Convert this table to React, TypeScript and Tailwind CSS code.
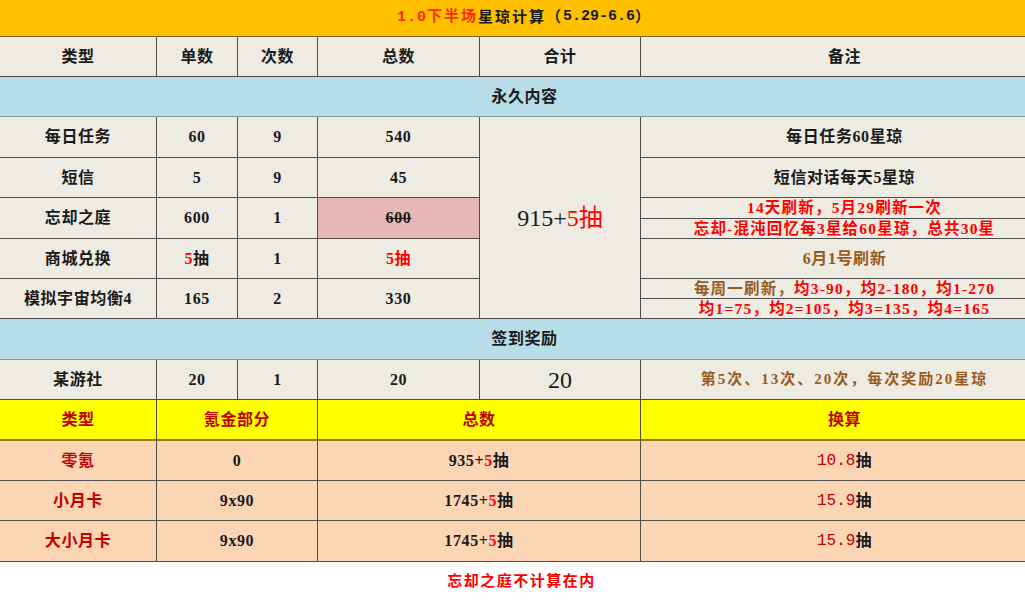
import type { ReactNode } from "react";

const line = "border-r border-b border-[#4d4d4d]";

function Cell({
  children,
  className = "",
}: {
  children?: ReactNode;
  className?: string;
}) {
  return (
    <div className={`flex items-center justify-center ${line} ${className}`}>
      {children}
    </div>
  );
}

const R = ({ children }: { children: ReactNode }) => (
  <span className="text-[#ff0000]">{children}</span>
);

const items = [
  { name: "每日任务", unit: "60", times: "9", total: "540" },
  { name: "短信", unit: "5", times: "9", total: "45" },
  { name: "忘却之庭", unit: "600", times: "1", total: "600", struck: true },
  { name: "商城兑换", unit: "5抽", times: "1", total: "5抽", red: true },
  { name: "模拟宇宙均衡4", unit: "165", times: "2", total: "330" },
];

const plans = [
  { name: "零氪", part: "0", total: "935", rate: "10.8" },
  { name: "小月卡", part: "9x90", total: "1745", rate: "15.9" },
  { name: "大小月卡", part: "9x90", total: "1745", rate: "15.9" },
];

export default function App() {
  const beige = "bg-[#eeebe3]";
  const peach = "bg-[#fcd5b4]";

  return (
    <div className="h-[600px] w-[1025px] overflow-hidden bg-white font-['Liberation_Serif','Noto_Sans_CJK_SC',serif] text-[16px] font-bold tracking-[0.6px] text-[#1a1a1a]">
      <div className="grid w-[1049px] grid-cols-[157px_81px_80px_162px_161px_408px] grid-rows-[37px_40px_40px_41px_40px_41px_40px_40px_41px_40px_41px_40px_40px_41px]">
        {/* Title */}
        <div className="col-span-6 flex items-center justify-center border-b border-[#7a6a2a] bg-[#ffc000] pb-[2px] text-[15px] tracking-[2px]">
          <span className="text-[#ff2a00]">
            <span className="font-['Liberation_Mono'] tracking-[1px]">1.0</span>
            下半场
          </span>
          星琼计算（
          <span className="font-['Liberation_Mono'] tracking-[0px]">5.29-6.6</span>）
        </div>

        {/* Header */}
        {["类型", "单数", "次数", "总数", "合计", "备注"].map((h) => (
          <Cell key={h} className={beige}>
            {h}
          </Cell>
        ))}

        <div className="col-span-6 flex items-center justify-center border-b border-[#8a9aa0] bg-[#b7dde8]">
          永久内容
        </div>

        {/* Permanent rows */}
        {items.map((it, i) => (
          <ItemRow key={it.name} it={it} index={i} beige={beige} />
        ))}

        <div className="col-span-6 flex items-center justify-center border-b border-[#8a9aa0] bg-[#b7dde8]">
          签到奖励
        </div>

        <Cell className={beige}>某游社</Cell>
        <Cell className={beige}>20</Cell>
        <Cell className={beige}>1</Cell>
        <Cell className={beige}>20</Cell>
        <Cell className={`${beige} text-[24px] font-normal tracking-normal`}>20</Cell>
        <Cell className={`${beige} text-[15px] tracking-[2px] text-[#9a5b1e]`}>
          第5次、13次、20次，每次奖励20星琼
        </Cell>

        {/* Paid section header */}
        <Cell className="border-b-2 border-b-[#8d7d1f] bg-[#ffff00] text-[#c00000]">类型</Cell>
        <Cell className="col-span-2 border-b-2 border-b-[#8d7d1f] bg-[#ffff00] text-[#c00000]">
          氪金部分
        </Cell>
        <Cell className="col-span-2 border-b-2 border-b-[#8d7d1f] bg-[#ffff00] text-[#c00000]">
          总数
        </Cell>
        <Cell className="border-b-2 border-b-[#8d7d1f] bg-[#ffff00] text-[#c00000]">换算</Cell>

        {plans.map((p) => (
          <PlanRow key={p.name} p={p} peach={peach} />
        ))}
      </div>

      <div className="mt-[8px] pl-[18px] text-center text-[15px] text-[#ff0000] tracking-[1.5px]">
        忘却之庭不计算在内
      </div>
    </div>
  );
}

function ItemRow({
  it,
  index,
  beige,
}: {
  it: (typeof items)[number];
  index: number;
  beige: string;
}) {
  return (
    <>
      <Cell className={beige}>{it.name}</Cell>
      <Cell className={beige}>
        {it.red ? (
          <>
            <R>5</R>抽
          </>
        ) : (
          it.unit
        )}
      </Cell>
      <Cell className={beige}>{it.times}</Cell>
      <Cell className={it.struck ? "bg-[#e6b8b7]" : beige}>
        {it.red ? (
          <R>5抽</R>
        ) : it.struck ? (
          <span className="line-through">{it.total}</span>
        ) : (
          it.total
        )}
      </Cell>
      {index === 0 && (
        <Cell className={`${beige} row-span-5 text-[24px] font-normal tracking-normal`}>
          915+<R>5抽</R>
        </Cell>
      )}
      <Notes index={index} beige={beige} />
    </>
  );
}

function Notes({ index, beige }: { index: number; beige: string }) {
  if (index === 2) {
    return (
      <div className={`flex flex-col ${line} ${beige} text-[15.5px] leading-none tracking-[1.2px] text-[#ff0000]`}>
        <div className="flex flex-1 items-center justify-center border-b border-[#4d4d4d]">
          14天刷新，5月29刷新一次
        </div>
        <div className="flex flex-1 items-center justify-center">
          忘却-混沌回忆每3星给60星琼，总共30星
        </div>
      </div>
    );
  }
  if (index === 4) {
    return (
      <div className={`flex flex-col ${line} ${beige} text-[15.5px] leading-none tracking-[1.2px] text-[#ff0000]`}>
        <div className="flex flex-1 items-center justify-center border-b border-[#4d4d4d]">
          <span className="text-[#9a5b1e]">每周一刷新，</span>
          均3-90，均2-180，均1-270
        </div>
        <div className="flex flex-1 items-center justify-center">
          均1=75，均2=105，均3=135，均4=165
        </div>
      </div>
    );
  }
  const text = ["每日任务60星琼", "短信对话每天5星琼", "", "6月1号刷新"][index];
  return (
    <Cell className={`${beige} ${index === 3 ? "text-[#9a5b1e]" : ""}`}>{text}</Cell>
  );
}

function PlanRow({ p, peach }: { p: (typeof plans)[number]; peach: string }) {
  return (
    <>
      <Cell className={`${peach} text-[#c00000]`}>{p.name}</Cell>
      <Cell className={`${peach} col-span-2`}>{p.part}</Cell>
      <Cell className={`${peach} col-span-2`}>
        {p.total}+<R>5</R>抽
      </Cell>
      <Cell className={peach}>
        <span className="font-['Liberation_Mono'] font-normal tracking-[0px] text-[#c00000]">
          {p.rate}
        </span>
        抽
      </Cell>
    </>
  );
}
